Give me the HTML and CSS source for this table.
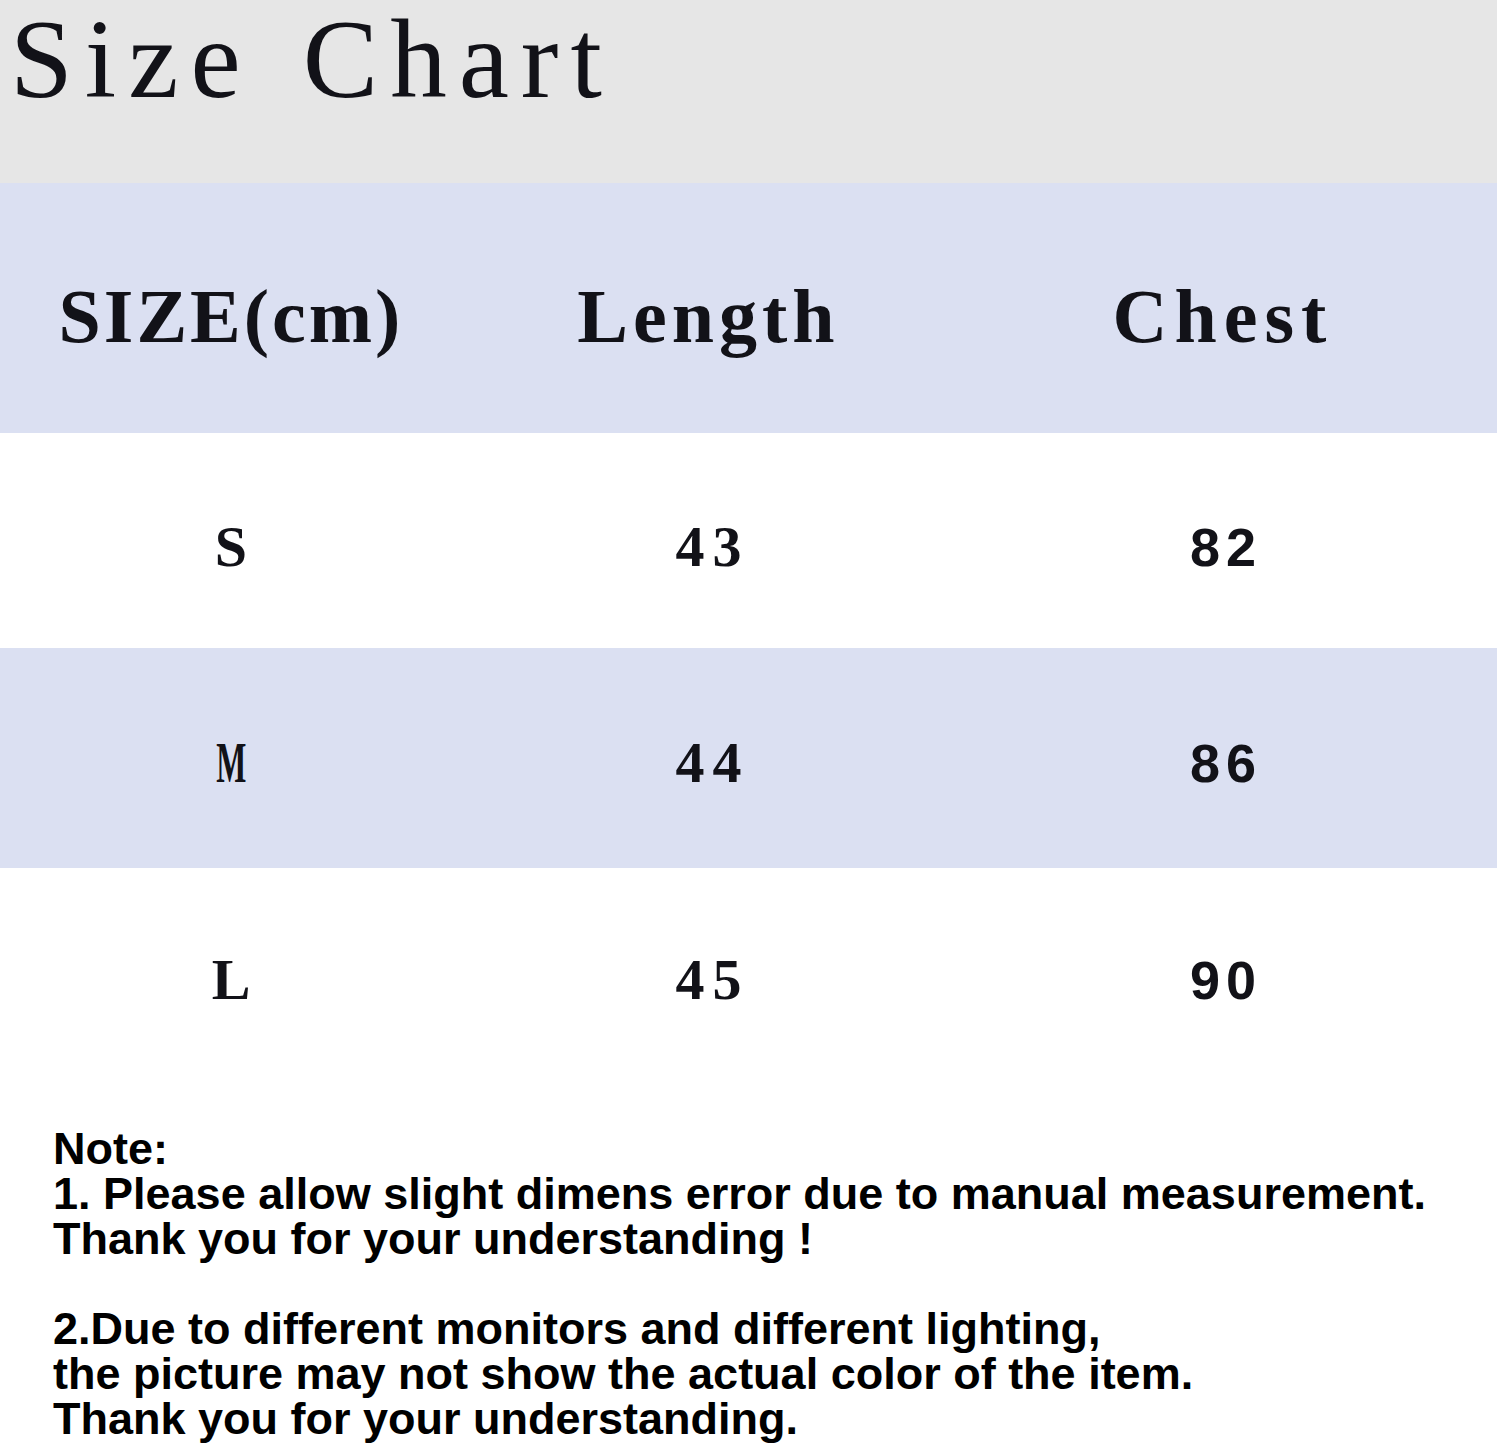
FILE: index.html
```html
<!DOCTYPE html>
<html>
<head>
<meta charset="utf-8">
<link rel="stylesheet" href="styles.css">
</head>
<body>
<div class="page">
  <div class="title-band">
    <h1 class="title">Size Chart</h1>
  </div>
  <div class="row head">
    <div class="cell">SIZE(cm)</div>
    <div class="cell len">Length</div>
    <div class="cell chest">Chest</div>
  </div>
  <div class="row data r1">
    <div class="cell">S</div>
    <div class="cell num">43</div>
    <div class="cell sans">82</div>
  </div>
  <div class="row data r2 tint">
    <div class="cell"><span class="narrow">M</span></div>
    <div class="cell num">44</div>
    <div class="cell sans">86</div>
  </div>
  <div class="row data r3">
    <div class="cell">L</div>
    <div class="cell num">45</div>
    <div class="cell sans">90</div>
  </div>
  <div class="notes">
    <p>Note:<br>1. Please allow slight dimens error due to manual measurement.<br>Thank you for your understanding !</p>
    <p>2.Due to different monitors and different lighting,<br>the picture may not show the actual color of the item.<br>Thank you for your understanding.</p>
  </div>
</div>
</body>
</html>
```

FILE: styles.css
```css
html, body {
  margin: 0;
  padding: 0;
  background: #ffffff;
}

.page {
  width: 1500px;
  height: 1452px;
  overflow: hidden;
  color: #121218;
}

.title-band {
  width: 1497px;
  height: 183px;
  background: #e6e6e6;
  box-sizing: border-box;
  padding: 0 0 0 10px;
}

.title {
  margin: 0;
  font-family: "Liberation Serif", serif;
  font-weight: normal;
  font-size: 113px;
  line-height: 118px;
  letter-spacing: 12px;
  word-spacing: 10px;
}

.row {
  width: 1497px;
  display: grid;
  grid-template-columns: 462px 493px 536px;
  align-items: baseline;
  box-sizing: border-box;
  font-family: "Liberation Serif", serif;
  font-weight: bold;
}

.cell {
  text-align: center;
}

.head {
  height: 250px;
  background: #dbe0f2;
  padding-top: 95px;
  font-size: 76px;
  line-height: 76px;
}

.head .cell {
  letter-spacing: 3px;
}

.head .len {
  letter-spacing: 5px;
}

.head .chest {
  letter-spacing: 7px;
}

.data {
  font-size: 58px;
  line-height: 58px;
}

.r1 {
  height: 215px;
  padding-top: 85px;
}

.r2 {
  height: 220px;
  padding-top: 86px;
}

.r3 {
  height: 222px;
  padding-top: 83px;
}

.tint {
  background: #dbe0f2;
}

.num {
  letter-spacing: 8px;
  padding-left: 8px;
}

.sans {
  font-family: "Liberation Sans", sans-serif;
  font-size: 54px;
  letter-spacing: 6px;
  padding-left: 6px;
}

.narrow {
  display: inline-block;
  transform: scaleX(0.55);
}

.notes {
  padding: 36px 0 0 53px;
  font-family: "Liberation Sans Narrow", "Liberation Sans", sans-serif;
  font-weight: bold;
  font-size: 45px;
  line-height: 45px;
  color: #000;
}

.notes p {
  margin: 0 0 45px 0;
}
```
